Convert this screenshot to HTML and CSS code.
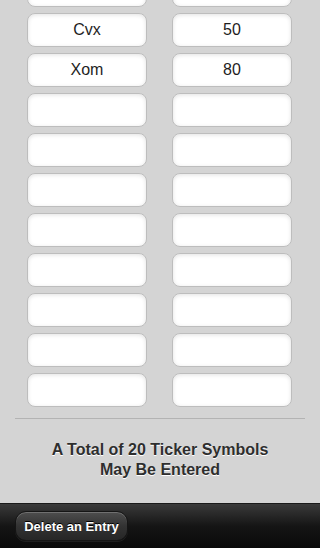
FILE: index.html
```html
<!DOCTYPE html>
<html lang="en">

<head>
  <meta charset="UTF-8">
  <title>Ticker Symbols</title>
  <meta name="viewport" content="width=device-width, initial-scale=1.0">
  <link rel="stylesheet" href="styles.css">
</head>

<body>

  <div class="page">
    <div class="content">
      <div class="fields">
        <input class="field" type="text" value="">
        <input class="field" type="text" value="">
        <input class="field" type="text" value="Cvx">
        <input class="field" type="text" value="50">
        <input class="field" type="text" value="Xom">
        <input class="field" type="text" value="80">
        <input class="field" type="text">
        <input class="field" type="text">
        <input class="field" type="text">
        <input class="field" type="text">
        <input class="field" type="text">
        <input class="field" type="text">
        <input class="field" type="text">
        <input class="field" type="text">
        <input class="field" type="text">
        <input class="field" type="text">
        <input class="field" type="text">
        <input class="field" type="text">
        <input class="field" type="text">
        <input class="field" type="text">
        <input class="field" type="text">
        <input class="field" type="text">
      </div>

      <hr class="divider">

      <p class="note">A Total of 20 Ticker Symbols<br>May Be Entered</p>
    </div>

    <div class="toolbar">
      <button class="btn" type="button">Delete an Entry</button>
    </div>
  </div>

</body>

</html>
```

FILE: styles.css
```css
body {
  margin: 0;
  background: #d4d4d4;
  font-family: "Liberation Sans", Arial, sans-serif;
  overflow: hidden;
}

.page {
  height: 548px;
  display: flex;
  flex-direction: column;
}

.content {
  flex: 1;
  overflow: hidden;
}

.fields {
  margin-top: -27px;
  padding-left: 27px;
  display: grid;
  grid-template-columns: 120px 120px;
  column-gap: 25px;
  row-gap: 6px;
}

.field {
  box-sizing: border-box;
  width: 120px;
  height: 34px;
  margin: 0;
  padding: 0 6px;
  border: 1px solid #bdbdbd;
  border-radius: 8px;
  background: #fff;
  box-shadow: inset 0 1px 4px rgba(0, 0, 0, 0.12);
  font-family: "Liberation Sans", Arial, sans-serif;
  font-size: 16px;
  color: #1e1e1e;
  text-align: center;
  outline: none;
}

.divider {
  margin: 11px 15px 0;
  border: 0;
  border-top: 1px solid #b3b3b3;
  height: 0;
}

.note {
  margin: 21px 0 0;
  text-align: center;
  font-size: 16px;
  font-weight: bold;
  line-height: 20px;
  color: #2e2e2e;
  text-shadow: 0 1px 0 #fff;
}

.toolbar {
  height: 45px;
  box-sizing: border-box;
  border-top: 1px solid #1a1a1a;
  background: linear-gradient(#3a3a3a, #151515 50%, #0a0a0a);
  display: flex;
  align-items: center;
  padding: 0 15px;
}

.btn {
  height: 30px;
  width: 113px;
  padding: 0;
  border: 1px solid #151515;
  border-radius: 11px;
  background: linear-gradient(#4e4e4e, #333 50%, #262626);
  box-shadow: inset 0 1px 0 rgba(255, 255, 255, 0.2), 0 1px 0 rgba(255, 255, 255, 0.08);
  font-family: "Liberation Sans", Arial, sans-serif;
  font-size: 13px;
  font-weight: bold;
  color: #fff;
  text-shadow: 0 -1px 0 #000;
}
```
